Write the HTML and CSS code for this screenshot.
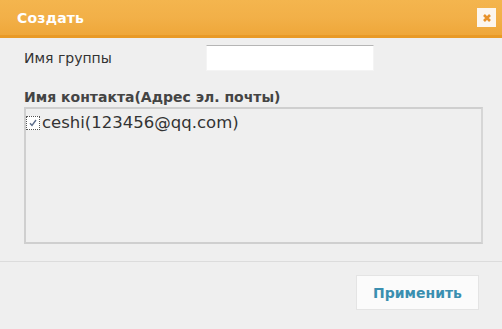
FILE: index.html
```html
<!DOCTYPE html>
<html lang="ru">
<head>
  <meta charset="UTF-8" />
  <title>Создать</title>
  <link rel="stylesheet" href="styles.css">
</head>
<body>
  <div class="dialog">
    <header class="dialog-head">
      <span class="dialog-title">Создать</span>
      <a href="#" class="btn-close" title="Закрыть">
        <svg viewBox="0 0 10 10"><path d="M2.5 2.5 L7.5 7.5 M7.5 2.5 L2.5 7.5" /></svg>
      </a>
    </header>

    <div class="dialog-body">
      <div class="row-group">
        <label for="groupName">Имя группы</label>
        <input type="text" id="groupName" class="input-group">
      </div>

      <h4 class="contacts-title">Имя контакта(Адрес эл. почты)</h4>
      <div class="contacts-list">
        <label class="contact">
          <span class="check"><svg viewBox="0 0 10 10"><path d="M2 5.2 L4 7.5 L8 2" /></svg></span>
          ceshi(123456@qq.com)
        </label>
      </div>
    </div>

    <footer class="dialog-foot">
      <button class="btn-apply">Применить</button>
    </footer>
  </div>
</body>
</html>
```

FILE: styles.css
```css
body {
  margin: 0;
  font-family: 'DejaVu Sans', Verdana, sans-serif;
  background: #efefef;
  color: #333;
}

.dialog {
  width: 502px;
  height: 329px;
  background: #efefef;
}

.dialog-head {
  height: 35px;
  display: flex;
  align-items: center;
  justify-content: space-between;
  padding: 0 6px 0 17px;
  background: linear-gradient(180deg, #f4b54e 0%, #f2b048 50%, #efa73a 100%);
  border-bottom: 3px solid #e99a26;
}

.dialog-title {
  color: #fff;
  font-weight: bold;
  font-size: 14px;
  letter-spacing: 0.2px;
}

.btn-close {
  width: 19px;
  height: 19px;
  background: #fcf6ee;
  display: flex;
  align-items: center;
  justify-content: center;
}

.btn-close svg {
  width: 12px;
  height: 12px;
  stroke: #e8922a;
  stroke-width: 2.2;
}

.dialog-body {
  padding: 7px 19px 0 24px;
  height: 216px;
  border-bottom: 1px solid #dcdcdc;
}

.row-group {
  display: flex;
  align-items: center;
  height: 26px;
}

.row-group label {
  font-size: 14px;
  width: 182px;
}

.input-group {
  width: 166px;
  height: 24px;
  margin: 0;
  padding: 0;
  background: #fff;
  border: 1px solid #f4f4f4;
  border-top: 1px solid #b5b5b5;
}

.contacts-title {
  margin: 18px 0 0;
  font-size: 14px;
  font-weight: bold;
  color: #444;
  line-height: 17px;
}

.contacts-list {
  margin-top: 1px;
  height: 133px;
  border: 2px solid #cfcfcf;
  border-right-color: #d6d6d6;
}

.contact {
  display: flex;
  align-items: center;
  gap: 2px;
  margin-top: 4px;
  font-size: 16.5px;
}

.check {
  width: 12px;
  height: 12px;
  border: 1px dotted #555;
  background: #fff;
  display: flex;
  align-items: center;
  justify-content: center;
}

.check svg {
  width: 10px;
  height: 10px;
  fill: none;
  stroke: #5a6b8a;
  stroke-width: 1.4;
}

.dialog-foot {
  display: flex;
  justify-content: flex-end;
  padding: 13px 23px 0 0;
}

.btn-apply {
  width: 123px;
  height: 35px;
  background: #fbfbfb;
  border: 1px solid #e4e4e4;
  color: #3a8fb0;
  font-family: 'DejaVu Sans', Verdana, sans-serif;
  font-weight: bold;
  font-size: 14px;
}
```
